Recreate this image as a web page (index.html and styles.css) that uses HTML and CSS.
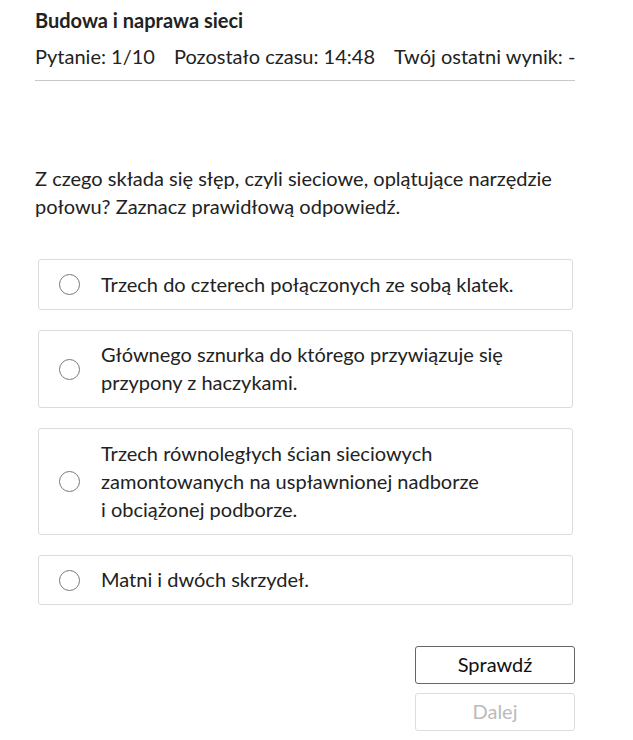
FILE: index.html
```html
<!DOCTYPE html>
<html lang="pl">
<head>
<meta charset="utf-8">
<title>Budowa i naprawa sieci</title>
<link rel="stylesheet" href="styles.css">
</head>
<body>
<div class="quiz">
  <header class="head">
    <h1 class="title">Budowa i naprawa sieci</h1>
    <div class="meta">
      <span>Pytanie: 1/10</span>
      <span>Pozostało czasu: 14:48</span>
      <span>Twój ostatni wynik: -</span>
    </div>
  </header>
  <p class="question">Z czego składa się słęp, czyli sieciowe, oplątujące narzędzie połowu? Zaznacz prawidłową odpowiedź.</p>
  <div class="options">
    <label class="option"><span class="radio"></span><span class="otext">Trzech do czterech połączonych ze sobą klatek.</span></label>
    <label class="option"><span class="radio"></span><span class="otext">Głównego sznurka do którego przywiązuje się<br>przypony z haczykami.</span></label>
    <label class="option"><span class="radio"></span><span class="otext">Trzech równoległych ścian sieciowych<br>zamontowanych na uspławnionej nadborze<br>i obciążonej podborze.</span></label>
    <label class="option"><span class="radio"></span><span class="otext">Matni i dwóch skrzydeł.</span></label>
  </div>
  <div class="actions">
    <button class="btn">Sprawdź</button>
    <button class="btn disabled" disabled>Dalej</button>
  </div>
</div>
</body>
</html>
```
FILE: styles.css
```css
html, body {
  margin: 0;
  padding: 0;
  background: #fff;
}
body {
  font-family: Lato, "Open Sans", sans-serif;
  color: #222;
}
.quiz {
  width: 540px;
  padding: 7px 0 0 35px;
}
.head {
  border-bottom: 1px solid #c8c8c8;
  padding-bottom: 10px;
}
.title {
  margin: 0;
  font-size: 20px;
  font-weight: 700;
  line-height: 26px;
}
.meta {
  display: flex;
  gap: 19px;
  font-size: 20px;
  line-height: 28px;
  margin-top: 9px;
  white-space: nowrap;
}
.meta span {
  flex: none;
}
.question {
  margin: 83px 0 0;
  font-size: 20px;
  line-height: 28px;
}
.options {
  margin: 39px 2px 0 3px;
  display: flex;
  flex-direction: column;
  gap: 20px;
}
.option {
  display: flex;
  align-items: center;
  border: 1px solid #dcdcdc;
  border-radius: 3px;
  padding: 9.5px 20px 11px;
  font-size: 20px;
  line-height: 28px;
}
.radio {
  flex: none;
  width: 19px;
  height: 19px;
  border: 1.5px solid #777;
  border-radius: 50%;
  margin: 2px 21px 0 0;
}
.actions {
  margin-top: 41px;
  display: flex;
  flex-direction: column;
  align-items: flex-end;
  gap: 9px;
}
.btn {
  width: 160px;
  height: 38px;
  background: #fff;
  border: 1px solid #666;
  border-radius: 3px;
  font-family: Lato, "Open Sans", sans-serif;
  font-size: 20px;
  line-height: 24px;
  color: #111;
  padding: 0 0 3px;
}
.btn.disabled {
  border-color: #ddd;
  color: #bbb;
}
```
